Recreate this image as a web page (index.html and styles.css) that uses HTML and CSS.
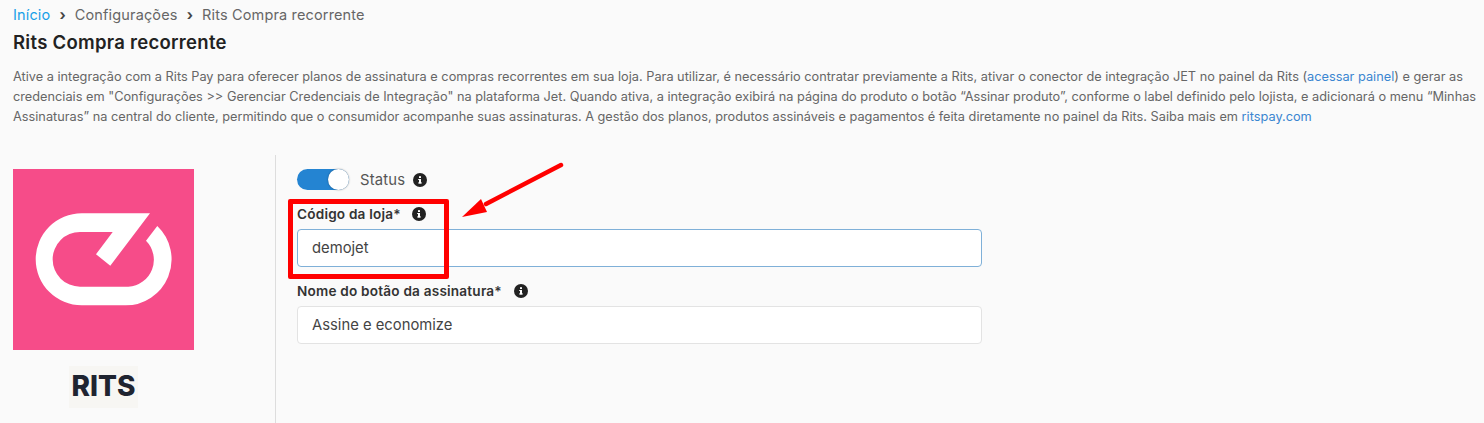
FILE: index.html
```html
<!DOCTYPE html>
<html lang="pt-BR">
<head>
  <meta charset="UTF-8">
  <title>Rits Compra recorrente</title>
  <link rel="stylesheet" href="styles.css">
</head>
<body>
  <nav class="breadcrumb">
    <a href="#">Início</a>
    <span class="sep">›</span>
    <span>Configurações</span>
    <span class="sep">›</span>
    <span>Rits Compra recorrente</span>
  </nav>
  <h1>Rits Compra recorrente</h1>
  <p class="intro">
    <span class="line">Ative a integração com a Rits Pay para oferecer planos de assinatura e compras recorrentes em sua loja. Para utilizar, é necessário contratar previamente a Rits, ativar o conector de integração JET no painel da Rits (<a href="#">acessar painel</a>) e gerar as</span>
    <span class="line">credenciais em "Configurações &gt;&gt; Gerenciar Credenciais de Integração" na plataforma Jet. Quando ativa, a integração exibirá na página do produto o botão “Assinar produto”, conforme o label definido pelo lojista, e adicionará o menu “Minhas</span>
    <span class="line">Assinaturas” na central do cliente, permitindo que o consumidor acompanhe suas assinaturas. A gestão dos planos, produtos assináveis e pagamentos é feita diretamente no painel da Rits. Saiba mais em <a href="#">ritspay.com</a></span>
  </p>

  <div class="content">
    <div class="brand">
      <svg class="logo" viewBox="0 0 181 181" width="181" height="181">
        <rect width="181" height="181" fill="#f64c89"/>
        <path fill="#fff" d="M137 44.3H68.7A46 46 0 0 0 68.7 136.3H112A46 46 0 0 0 144.3 57L133 71.7A27 27 0 0 1 115.3 117.7H67A27.3 27.3 0 0 1 67 63H99.7L83 85.3L97.3 96.7Z"/>
      </svg>
      <div class="brand-name">RITS</div>
    </div>

    <form class="form">
      <div class="status">
        <span class="toggle"><span class="knob"></span></span>
        <span class="status-label">Status</span>
        <svg class="info" viewBox="0 0 14 14" width="14" height="14"><circle cx="7" cy="7" r="7" fill="#222"/><rect x="6" y="6" width="2" height="4.4" fill="#fff"/><rect x="5.2" y="9.4" width="3.6" height="1.1" fill="#fff"/><rect x="5.2" y="6" width="1.6" height="1" fill="#fff"/><rect x="6" y="3.2" width="2" height="1.8" fill="#fff"/></svg>
      </div>

      <div class="field">
        <label>Código da loja* <svg class="info" viewBox="0 0 14 14" width="14" height="14"><circle cx="7" cy="7" r="7" fill="#222"/><rect x="6" y="6" width="2" height="4.4" fill="#fff"/><rect x="5.2" y="9.4" width="3.6" height="1.1" fill="#fff"/><rect x="5.2" y="6" width="1.6" height="1" fill="#fff"/><rect x="6" y="3.2" width="2" height="1.8" fill="#fff"/></svg></label>
        <input class="focused" type="text" value="demojet">
      </div>

      <div class="field">
        <label>Nome do botão da assinatura* <svg class="info" viewBox="0 0 14 14" width="14" height="14"><circle cx="7" cy="7" r="7" fill="#222"/><rect x="6" y="6" width="2" height="4.4" fill="#fff"/><rect x="5.2" y="9.4" width="3.6" height="1.1" fill="#fff"/><rect x="5.2" y="6" width="1.6" height="1" fill="#fff"/><rect x="6" y="3.2" width="2" height="1.8" fill="#fff"/></svg></label>
        <input type="text" value="Assine e economize">
      </div>
    </form>
  </div>

  <!-- marcacao por cima do print -->
  <div class="mark-box"></div>
  <svg class="mark-arrow" viewBox="0 0 110 60" width="110" height="60">
    <path d="M99 3L24 42" stroke="#f00" stroke-width="4.5" stroke-linecap="round" fill="none"/>
    <path d="M0 55L19 37L25 50Z" fill="#f00"/>
  </svg>
</body>
</html>
```

FILE: styles.css
```css
:root {
  --text: #666;
  --dark: #222;
  --link: #3b86d1;
  --line: #e3e3e3;
}

html, body {
  height: 100%;
}

body {
  margin: 0;
  padding: 5px 0 0 13px;
  box-sizing: border-box;
  display: flex;
  flex-direction: column;
  height: 100vh;
  overflow: hidden;
  background-color: #fafafa;
  color: var(--text);
  font-family: Inter, 'Noto Sans', sans-serif;
}

a {
  color: var(--link);
  text-decoration: none;
}

.breadcrumb {
  display: flex;
  align-items: center;
  gap: 9px;
  height: 18px;
  font-size: 14.5px;
  color: #666;
  letter-spacing: 0.15px;
  white-space: nowrap;
}

.breadcrumb a {
  color: #18a0e8;
}

.breadcrumb .sep {
  color: #444;
  font-weight: 700;
}

h1 {
  margin: 7px 0 0;
  font-size: 18.5px;
  line-height: 24px;
  font-weight: 600;
  color: var(--dark);
  letter-spacing: 0.28px;
}

.intro {
  margin: 13px 0 0;
  font-size: 12.75px;
  line-height: 20px;
  white-space: nowrap;
}

.line {
  display: block;
}

.content {
  flex: 1;
  display: flex;
  margin-top: 28px;
}

.brand {
  width: 263px;
  box-sizing: border-box;
  border-right: 1px solid #ddd;
  padding-top: 14px;
}

.logo {
  display: block;
}

.brand-name {
  width: 69px;
  height: 42px;
  margin: 16px 0 0 56px;
  background-color: #f7f6f3;
  color: #1f2430;
  font-size: 28px;
  font-weight: 800;
  line-height: 40px;
  text-align: center;
}

.form {
  width: 685px;
  padding: 14px 0 0 21px;
}

.status {
  display: flex;
  align-items: center;
  height: 21px;
}

.toggle {
  display: flex;
  justify-content: flex-end;
  align-items: center;
  width: 52px;
  height: 21px;
  border-radius: 11px;
  background-color: #2484d2;
}

.knob {
  width: 21px;
  height: 21px;
  border-radius: 50%;
  background-color: #fff;
  box-shadow: 0 0 2px rgba(0,0,0,0.4);
}

.status-label {
  margin: 0 8px 0 11px;
  font-size: 14.8px;
  color: #555;
  letter-spacing: 0.2px;
}

.info {
  flex: none;
  vertical-align: -2px;
  margin-left: 8px;
}

.status .info {
  margin-left: 0;
}

.field {
  margin-top: 15px;
}

.field label {
  display: block;
  height: 18px;
  margin-bottom: 6px;
  font-size: 13.6px;
  line-height: 18px;
  font-weight: 600;
  color: #333;
  letter-spacing: 0.2px;
}

.field input {
  display: block;
  width: 100%;
  height: 38px;
  box-sizing: border-box;
  padding: 0 14px;
  border: 1px solid var(--line);
  border-radius: 4px;
  background-color: #fff;
  color: #444;
  font-family: inherit;
  font-size: 14.8px;
}

.field input.focused {
  border-color: #7fb0d8;
}

.mark-box {
  position: absolute;
  left: 288px;
  top: 199px;
  width: 161px;
  height: 80px;
  box-sizing: border-box;
  border: 5px solid #f00;
  border-radius: 2px;
}

.mark-arrow {
  position: absolute;
  left: 462px;
  top: 162px;
}
```
